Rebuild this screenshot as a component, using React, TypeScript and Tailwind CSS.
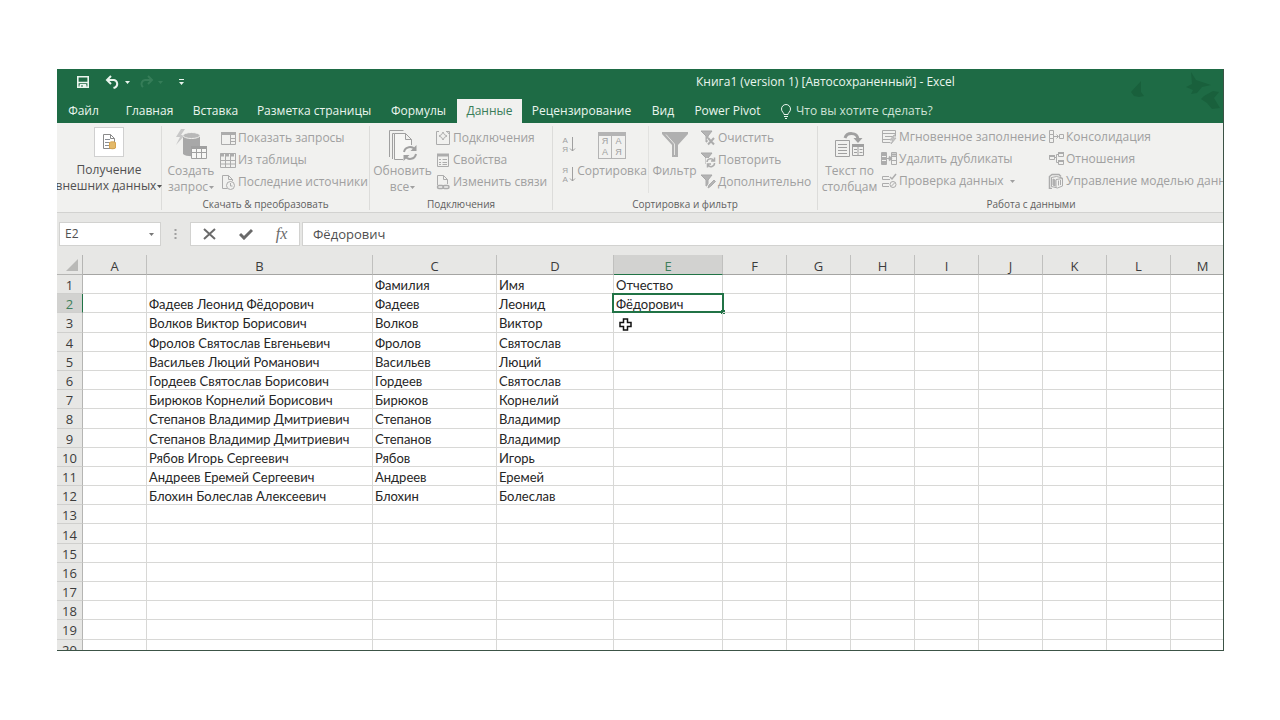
import { useState } from "react";
import type { ReactNode } from "react";

const tabs = [
    { name: "Файл", className: "w-[53px] mr-1.5" },
    { name: "Главная", className: "w-[67px]" },
    { name: "Вставка", className: "w-[65px]" },
    { name: "Разметка страницы", className: "w-[132px]" },
    { name: "Формулы", className: "w-[77px]" },
    { name: "Данные", className: "w-[65px]" },
    { name: "Рецензирование", className: "w-[119px]" },
    { name: "Вид", className: "w-[44px]" },
    { name: "Power Pivot", className: "w-[85px]" },
];

const columns = [
    { name: "A", className: "w-[64px]" },
    { name: "B", className: "w-[226px]" },
    { name: "C", className: "w-[124px]" },
    { name: "D", className: "w-[117px]" },
    { name: "E", className: "w-[109px]" },
    { name: "F", className: "w-[64px]" },
    { name: "G", className: "w-[64px]" },
    { name: "H", className: "w-[64px]" },
    { name: "I", className: "w-[64px]" },
    { name: "J", className: "w-[64px]" },
    { name: "K", className: "w-[64px]" },
    { name: "L", className: "w-[64px]" },
    { name: "M", className: "w-[64px]" },
];

const rows: string[][] = [
    ["", "", "Фамилия", "Имя", "Отчество"],
    ["", "Фадеев Леонид Фёдорович", "Фадеев", "Леонид", "Фёдорович"],
    ["", "Волков Виктор Борисович", "Волков", "Виктор"],
    ["", "Фролов Святослав Евгеньевич", "Фролов", "Святослав"],
    ["", "Васильев Люций Романович", "Васильев", "Люций"],
    ["", "Гордеев Святослав Борисович", "Гордеев", "Святослав"],
    ["", "Бирюков Корнелий Борисович", "Бирюков", "Корнелий"],
    ["", "Степанов Владимир Дмитриевич", "Степанов", "Владимир"],
    ["", "Степанов Владимир Дмитриевич", "Степанов", "Владимир"],
    ["", "Рябов Игорь Сергеевич", "Рябов", "Игорь"],
    ["", "Андреев Еремей Сергеевич", "Андреев", "Еремей"],
    ["", "Блохин Болеслав Алексеевич", "Блохин", "Болеслав"],
    [], [], [], [], [], [], [], [],
];

type IconProps = {
    w?: number;
    h?: number;
    children: ReactNode;
}

function Icon({ w = 16, h = 16, children }: IconProps) {
    return (
        <svg width={w} height={h} viewBox={`0 0 ${w} ${h}`} fill="none" stroke="currentColor" strokeWidth="1" className="shrink-0" aria-hidden="true">
            {children}
        </svg>
    )
}

function Caret({ className = "" }: { className?: string }) {
    return (
        <svg width="5" height="3" viewBox="0 0 5 3" className={`inline-block shrink-0 ${className}`} aria-hidden="true">
            <path d="M0 0h5L2.5 3z" fill="currentColor" />
        </svg>
    )
}

const funnel = <path d="M1 1h11L8 6v6H6V6z" fill="#b4b4b4" stroke="#a8a8a8" />;

const icons = {
    showQueries: (
        <Icon>
            <path d="M1.5 2.5h14v12h-14zM10.5 5v9M11 8.5h4M11 11.5h4" />
            <path d="M1 3.5h15" strokeWidth="3" />
        </Icon>
    ),
    fromTable: (
        <Icon>
            <path d="M.5 1.5h15v14H.5zM.5 8.5h15M.5 12h15M5.5 2v13M10.5 2v13" />
            <path d="M0 3h16" strokeWidth="3" strokeDasharray="4 1" />
        </Icon>
    ),
    recent: (
        <Icon>
            <path d="M7 14.5H2.5v-13h6l4 4V7M8.5 1.5v4h4" />
            <circle cx="10.5" cy="11.5" r="4" fill="#f1f1ef" />
            <path d="M10.5 9v3h2" />
        </Icon>
    ),
    connections: (
        <Icon>
            <path d="M4 1.5H1.5v13h13v-10L12 1.5h-1M12 1.5h2.5v3" />
            <path d="M8 2l1.4 2.6L12 6 9.4 7.4 8 10 6.6 7.4 4 6l2.6-1.4z" />
        </Icon>
    ),
    properties: (
        <Icon>
            <path d="M2.5 2.5h11v12h-11zM4 7.5h2M4 10.5h2M4 12.5h2M7.5 7.5H12M7.5 10.5H12M7.5 12.5H12" />
            <path d="M2 3h12" strokeWidth="3" />
        </Icon>
    ),
    editLinks: (
        <Icon>
            <path d="M2.5 11V1.5h6l4 4V10M8.5 1.5v4h4" />
            <rect x="2.5" y="11.5" width="6" height="3" rx="1.5" strokeWidth="1.5" />
            <rect x="8" y="11.5" width="6" height="3" rx="1.5" strokeWidth="1.5" />
        </Icon>
    ),
    clear: (
        <Icon>
            {funnel}
            <path d="M8 8l6 6M14 8l-6 6" stroke="#f1f1ef" strokeWidth="4" />
            <path d="M8 8l6 6.5M14 8l-6 6.5" strokeWidth="2" />
        </Icon>
    ),
    reapply: (
        <Icon>
            {funnel}
            <path d="M6 6h9v9H6z" fill="#f1f1ef" stroke="none" />
            <path d="M7 10a3.500 3.500 0 0 1 6.500-1.500M14.500 11a3.500 3.500 0 0 1-6.500 2M14.500 5.500v3.500H11M7.500 15.500V12H11" strokeWidth="1.500" />
        </Icon>
    ),
    advanced: (
        <Icon>
            {funnel}
            <path d="M8 14L14 6" stroke="#f1f1ef" strokeWidth="4" />
            <path d="M8 14l1-3 5-5 1.500 1.500-5 5z" fill="#b4b4b4" />
        </Icon>
    ),
    flashFill: (
        <Icon>
            <path d="M1.5 1.5h13v6M1.5 1.5v12h8M2 4.5h12M4 7.5h8M2 10.5h7" />
            <path d="M13 6l-4 5h3l-2 4 5-6h-3l2-3z" fill="#c4c4c4" stroke="#b8b8b8" />
        </Icon>
    ),
    duplicates: (
        <Icon>
            <path d="M.5 1.5h5v12h-5zM10.5 1.5h5v12h-5zM10.5 5.5h5M10.5 9.5h5M6 7.5h3" />
            <path d="M1 3.5h4M1 7.5h4M1 11.5h4" strokeWidth="3" />
            <path d="M11 3.5h4M8 5.5l2 2-2 2" strokeWidth="2" />
        </Icon>
    ),
    validation: (
        <Icon>
            <path d="M8 3.5H1.5v3H9M8 10.5H1.5v3H8" />
            <path d="M9 4l2 2 4-5" strokeWidth="1.5" />
            <circle cx="12" cy="11.5" r="3" />
            <path d="M10 13.5l4-4" />
        </Icon>
    ),
    consolidate: (
        <Icon>
            <path d="M1.5 1.5h4v4h-4zM1.5 5.5h4v4h-4zM1.5 9.5h4v4h-4zM11.5 5.5h4v4h-4zM6 7.5h4M8.5 5.5l2 2-2 2" />
        </Icon>
    ),
    relations: (
        <Icon>
            <path d="M1.5 4.5h5v4h-5zM10.5 1.5h5v4h-5zM10.5 9.5h5v4h-5zM7 6.5h1.500v-3h2M8.5 6.5v5h2" />
            <path d="M1 5h6M10 2h6M10 10h6" strokeWidth="2" />
        </Icon>
    ),
    dataModel: (
        <Icon>
            <path d="M4 15.5H1.5v-12L4 1.5h7l2 2" strokeWidth="1.5" />
            <path d="M3.5 4.5v9M3.5 4.5l5-1 6 1.5v8l-5 2-6-1.5zM8 6.5v8M8 6.5l6.5-1M10.5 7.5v5M12.5 7v5" />
            <path d="M5 6l2 1v6l-2-1z" fill="#b4b4b4" />
        </Icon>
    ),
};

function SmallButton({ icon, label, caret }: { icon: ReactNode; label: string; caret?: boolean }) {
    return (
        <button type="button" className="flex h-[22px] items-center gap-0.5 whitespace-nowrap">
            <span className="text-[#acacac]">{icon}</span>
            <span>{label}</span>
            {caret && <Caret className="ml-1" />}
        </button>
    )
}

type LargeButtonProps = {
    icon: ReactNode;
    lines: string[];
    caret?: boolean;
    className?: string;
}

function LargeButton({ icon, lines, caret, className = "" }: LargeButtonProps) {
    return (
        <button type="button" className={`flex shrink-0 flex-col items-center whitespace-nowrap leading-4 ${className}`}>
            <span className="flex h-[36px] items-center">{icon}</span>
            {lines.map((line, index) => (
                <span key={line} className="flex items-center gap-px">
                    {line}
                    {caret && index === lines.length - 1 && <Caret />}
                </span>
            ))}
        </button>
    )
}

function Group({ title, className, children }: { title: string; className: string; children: ReactNode }) {
    return (
        <section className={`mb-0.5 mt-[3px] flex shrink-0 flex-col justify-between ${className}`}>
            <div className="flex">{children}</div>
            <h2 className="text-center text-[10px] leading-3 text-[#606060]">{title}</h2>
        </section>
    )
}

function TitleBar() {
    return (
        <div className="relative flex h-[30px] items-center overflow-hidden pb-1">
            <div className="flex items-center pl-5">
                <button type="button" aria-label="Сохранить">
                    <Icon w={12} h={12}>
                        <path d="M.8.8h10.400v10.400H.8z" strokeWidth="1.6" />
                        <path d="M1 6.5h10" strokeWidth="1.5" />
                        <path d="M3 11V8.5h6V11z" fill="currentColor" />
                        <path d="M5 9v2" stroke="#1e6b45" />
                    </Icon>
                </button>
                <button type="button" aria-label="Отменить" className="ml-4 flex items-center gap-1">
                    <Icon w={16} h={14}>
                        <path d="M6 1L2 5l4 4M2 5h7a4 4 0 0 1 1 7.500L8.500 13" strokeWidth="2" />
                    </Icon>
                    <Caret />
                </button>
                <button type="button" aria-label="Вернуть" className="ml-2 flex items-center gap-1 text-[#357d58]">
                    <Icon w={16} h={14}>
                        <path d="M10 1l4 4-4 4M14 5H7a4 4 0 0 0-3 6l1 1" strokeWidth="2" />
                    </Icon>
                    <Caret />
                </button>
                <button type="button" aria-label="Настройка панели быстрого доступа" className="ml-4">
                    <Icon w={5} h={6}>
                        <path d="M0 .5h5" />
                        <path d="M0 3h5L2.5 6z" fill="currentColor" stroke="none" />
                    </Icon>
                </button>
            </div>
            <h1 className="absolute left-[639px] text-xs">Книга1 (version 1) [Автосохраненный] - Excel</h1>
        </div>
    )
}

function Birds() {
    return (
        <svg width="110" height="46" viewBox="0 0 110 46" className="absolute right-0 top-0" fill="#19603c" aria-hidden="true">
            <path d="M28 12c-3 4-7 7-10 11l3 4 5 1 5-1-3-4z" />
            <path d="M78 3l5 8 9 3 6 2-9 2-5 6-6 1 2-4-7-3 6-3z" />
            <path d="M91 27l9-5 6 1-5 6 6 10-8 1-5-6-6-4z" />
        </svg>
    )
}

function SortButton({ label, letters }: { label: string; letters: string[] }) {
    return (
        <button type="button" aria-label={label} className="flex font-['Liberation_Sans',sans-serif] text-[8px] leading-[9px]">
            <span>{letters[0]}<br />{letters[1]}</span>
            <Icon w={8} h={17}>
                <path d="M4.5 1v14M2 12.5L4.5 15 7 12.500" />
            </Icon>
        </button>
    )
}

function Ribbon() {
    return (
        <div className="flex h-[90px] shrink-0 overflow-hidden border-b border-[#d2d2d0] bg-[#f1f1ef] text-xs text-[#a0a0a0]">
            <div className="mb-0.5 mt-[3px] flex w-[105px] shrink-0 justify-center border-r border-[#dcdcda]">
                <LargeButton
                    className="text-[#505050]"
                    caret
                    lines={["Получение", "внешних данных"]}
                    icon={
                        <span className="mb-1 flex h-[30px] w-[30px] items-center justify-center border border-[#d0d0d0] bg-white">
                            <Icon w={16} h={18}>
                                <path d="M2.5 1.5h7l4 4v10h-11zM9.5 1.5v4h4" stroke="#8a8a8a" />
                                <path d="M4 6.5h5M4 9.5h5M4 12.5h5" stroke="#8a8f96" />
                                <path d="M8.5 9.5c2-1 4-1 6 0v5.500c-2 1-4 1-6 0z" fill="#e3b96a" stroke="#d6a44f" />
                            </Icon>
                        </span>
                    }
                />
            </div>

            <Group title="Скачать & преобразовать" className="w-[208px] border-r border-[#dcdcda]">
                <LargeButton
                    className="w-[58px] pt-px"
                    caret
                    lines={["Создать", "запрос"]}
                    icon={
                        <Icon w={34} h={34}>
                            <path d="M7 1L2 9h4l-4 8 9-10H7l4-6z" fill="#c8c8c8" stroke="none" />
                            <path d="M9 8v18c3 3 14 3 17 0V8z" fill="#a8a8a8" stroke="none" />
                            <ellipse cx="17.5" cy="7.5" rx="8.5" ry="3" fill="#b8b8b8" stroke="#f1f1ef" />
                            <path d="M17.5 18.5h15v12h-15z" fill="#f7f7f5" />
                            <path d="M17.5 24.5h15M22.5 19v12M27.5 19v12" />
                            <path d="M17 19.5h16" strokeWidth="3" />
                        </Icon>
                    }
                />
                <div className="pt-px">
                    <SmallButton icon={icons.showQueries} label="Показать запросы" />
                    <SmallButton icon={icons.fromTable} label="Из таблицы" />
                    <SmallButton icon={icons.recent} label="Последние источники" />
                </div>
            </Group>

            <Group title="Подключения" className="w-[183px] border-r border-[#dcdcda]">
                <LargeButton
                    className="w-[65px] pt-px"
                    caret
                    lines={["Обновить", "все"]}
                    icon={
                        <Icon w={32} h={32}>
                            <path d="M2.5 28V1.5h14M5.5 30V4.5M5.5 4.5h2" />
                            <path d="M16 30.5H7.5v-26h11l6 6V16M18.5 4.5v6h6" fill="#f6f6f4" />
                            <path d="M17 23a6 6 0 0 1 11-2M29 25a6 6 0 0 1-11 2" strokeWidth="2" />
                            <path d="M29.5 16v6h-6zM16.5 32v-6h6z" fill="currentColor" stroke="none" />
                        </Icon>
                    }
                />
                <div className="pt-px">
                    <SmallButton icon={icons.connections} label="Подключения" />
                    <SmallButton icon={icons.properties} label="Свойства" />
                    <SmallButton icon={icons.editLinks} label="Изменить связи" />
                </div>
            </Group>

            <Group title="Сортировка и фильтр" className="w-[265px] border-r border-[#dcdcda]">
                <div className="flex w-[23px] flex-col items-end gap-3 pt-2.5">
                    <SortButton label="Сортировка от А до Я" letters={["А", "Я"]} />
                    <SortButton label="Сортировка от Я до А" letters={["Я", "А"]} />
                </div>
                <LargeButton
                    className="w-[72px] pt-px"
                    lines={["Сортировка"]}
                    icon={
                        <span className="grid h-[27px] w-[28px] grid-cols-2 divide-x divide-[#b4b4b4] border border-t-4 border-[#b4b4b4] font-['Liberation_Sans',sans-serif] text-[9px] leading-[11px]">
                            <span>Я<br />А</span>
                            <span>А<br />Я</span>
                        </span>
                    }
                />
                <LargeButton
                    className="w-[52px] border-l border-[#e2e2e0] pt-px"
                    lines={["Фильтр"]}
                    icon={
                        <Icon w={28} h={30}>
                            <path d="M1 2h26v2L17 15v12h-6V15L1 4z" fill="#b0b0b0" stroke="none" />
                            <path d="M5 4.5l8.500 9.500v11" stroke="#e6e6e4" />
                        </Icon>
                    }
                />
                <div className="pt-px">
                    <SmallButton icon={icons.clear} label="Очистить" />
                    <SmallButton icon={icons.reapply} label="Повторить" />
                    <SmallButton icon={icons.advanced} label="Дополнительно" />
                </div>
            </Group>

            <Group title="Работа с данными" className="w-[426px]">
                <LargeButton
                    className="w-[63px] pt-px"
                    lines={["Текст по", "столбцам"]}
                    icon={
                        <Icon w={32} h={28}>
                            <path d="M1.5 9.5h14v16h-14zM4 13.5h9M4 16.5h9M4 19.5h9M4 22.5h9" />
                            <path d="M18.5 13.5h11v11h-11zM24 14v10M20 18.5h3M20 21.5h3M25.5 18.5h3M25.5 21.5h3" />
                            <path d="M18 14.5h12" strokeWidth="3" />
                            <path d="M11 7c2-6 12-6 13 1" strokeWidth="3" />
                            <path d="M19.500 7h9L24 12z" fill="currentColor" stroke="none" />
                        </Icon>
                    }
                />
                <div className="w-[167px]">
                    <SmallButton icon={icons.flashFill} label="Мгновенное заполнение" />
                    <SmallButton icon={icons.duplicates} label="Удалить дубликаты" />
                    <SmallButton icon={icons.validation} label="Проверка данных" caret />
                </div>
                <div>
                    <SmallButton icon={icons.consolidate} label="Консолидация" />
                    <SmallButton icon={icons.relations} label="Отношения" />
                    <SmallButton icon={icons.dataModel} label="Управление моделью данных" />
                </div>
            </Group>
        </div>
    )
}

function FormulaBar({ value, onChange }: { value: string; onChange: (value: string) => void }) {
    return (
        <div className="flex shrink-0 bg-[#e7e7e5] pb-[9px] pl-0.5 pt-[9px] text-xs text-[#505050]">
            <div className="flex h-6 w-[102px] items-center border border-[#d2d2d0] bg-white pr-1.5">
                <input aria-label="Имя ячейки" defaultValue="E2" className="w-full min-w-0 pl-[5px] outline-none" />
                <button type="button" aria-label="Список имён" className="flex text-[#777]"><Caret /></button>
            </div>
            <div className="flex w-[29px] items-center justify-center text-[#a0a0a0]">
                <Icon w={3} h={12}>
                    <path d="M1.5 1v10" strokeWidth="2" strokeDasharray="2 2" />
                </Icon>
            </div>
            <div className="flex h-6 w-[110px] items-center justify-around border border-[#d2d2d0] bg-white text-[#6a6a6a]">
                <button type="button" aria-label="Отмена">
                    <Icon w={13} h={12}><path d="M1 1l11 10M12 1L1 11" strokeWidth="2" /></Icon>
                </button>
                <button type="button" aria-label="Ввод">
                    <Icon w={14} h={12}><path d="M1 6l4 4 8-8" strokeWidth="3" /></Icon>
                </button>
                <button type="button" aria-label="Вставить функцию" className="font-['Liberation_Serif',serif] text-base italic leading-5">fx</button>
            </div>
            <input aria-label="Строка формул" value={value} onChange={(e) => onChange(e.target.value)}
                className="ml-0.5 h-6 min-w-0 flex-1 border border-r-0 border-[#d2d2d0] bg-white pl-2.5 text-[13px] outline-none" />
        </div>
    )
}

function Sheet({ value }: { value: string }) {
    return (
        <div className="min-h-0 flex-1 overflow-hidden bg-white">
            <table className="h-[404px] w-[1175px] table-fixed border-separate border-spacing-0 font-[Lato,Carlito,sans-serif] text-[13px] leading-[16px] text-[#262626]">
                <thead>
                    <tr className="h-5 bg-[#e7e7e5] font-['Open_Sans',sans-serif] text-[#3c3c3c]">
                        <td className="w-[26px] border-b border-r border-[#b5b5b3] p-0 pr-1">
                            <svg width="12" height="12" viewBox="0 0 12 12" className="ml-auto" aria-hidden="true">
                                <path d="M12 0v12H0z" fill="#b9b9b7" />
                            </svg>
                        </td>
                        {columns.map((col) => (
                            <th key={col.name} scope="col"
                                className={`${col.className} border-b border-r p-0 pt-0.5 font-normal ${col.name === "E" ? "border-b-[#217346] border-r-[#c0c0be] bg-[#d2d2d0] text-[#3f7f5c]" : "border-b-[#a5a5a3] border-r-[#c0c0be]"}`}>
                                {col.name}
                            </th>
                        ))}
                    </tr>
                </thead>
                <tbody>
                    {rows.map((row, r) => (
                        <tr key={r}>
                            <th scope="row"
                                className={`border-b border-r border-b-[#cfcfcd] p-0 pt-0.5 font-['Open_Sans',sans-serif] font-normal ${r === 1 ? "border-r-[#217346] bg-[#d2d2d0] text-[#3f7f5c]" : "border-r-[#b5b5b3] bg-[#e7e7e5] text-[#3c3c3c]"}`}>
                                {r + 1}
                            </th>
                            {columns.map((col, c) => (
                                <td key={col.name} className="relative whitespace-nowrap border-b border-r border-[#d8d8d6] pb-0 pl-0.5 pr-0 pt-0.5">
                                    {r === 1 && c === 4 ? value : row[c]}
                                    {r === 1 && c === 4 && (
                                        <span className="absolute -inset-x-0.5 -inset-y-px border-2 border-[#217346]">
                                            <span className="absolute -bottom-[3px] -right-[3px] h-1 w-1 bg-[#217346]" />
                                        </span>
                                    )}
                                    {r === 2 && c === 4 && (
                                        <svg width="13" height="13" viewBox="0 0 13 13" className="absolute left-[5px] top-[5px]" aria-hidden="true">
                                            <path d="M4.5 1h4v3.500H12v4H8.500V12h-4V8.500H1v-4h3.500z" fill="#fff" stroke="#111" strokeWidth="1.500" />
                                        </svg>
                                    )}
                                </td>
                            ))}
                        </tr>
                    ))}
                </tbody>
            </table>
        </div>
    )
}

export default function App() {

    const [activeTab, setActiveTab] = useState("Данные");
    const [value, setValue] = useState("Фёдорович");

    return (
        <div className="h-screen bg-white pb-[69px] pl-[57px] pr-14 pt-[69px] font-['Open_Sans',sans-serif]">
            <main className="flex h-full flex-col overflow-hidden border-b border-r border-[#3c5346] bg-[#e7e7e5]">
                <header className="relative shrink-0 bg-[#1e6b45] text-[#eaf5ee]">
                    <Birds />
                    <TitleBar />
                    <nav className="relative flex h-6 text-xs">
                        {tabs.map((tab) => (
                            <button key={tab.name} type="button" onClick={() => setActiveTab(tab.name)}
                                className={`${tab.className} shrink-0 whitespace-nowrap text-center ${tab.name === activeTab ? "bg-[#f1f1ef] text-[#3a7d5a]" : ""}`}>
                                {tab.name}
                            </button>
                        ))}
                        <label className="ml-2.5 flex flex-1 items-center gap-1">
                            <Icon w={12} h={15}>
                                <path d="M4 10.5C4 8.5 1.5 8 1.5 5a4.500 4.500 0 0 1 9 0c0 3-2.500 3.500-2.500 5.500zM4 12.500h4M5 14.500h2" />
                            </Icon>
                            <input placeholder="Что вы хотите сделать?" aria-label="Помощник" className="w-[180px] outline-none placeholder:text-[#cfe3d7]" />
                        </label>
                    </nav>
                </header>
                <Ribbon />
                <FormulaBar value={value} onChange={setValue} />
                <Sheet value={value} />
            </main>
        </div>
    )
}
